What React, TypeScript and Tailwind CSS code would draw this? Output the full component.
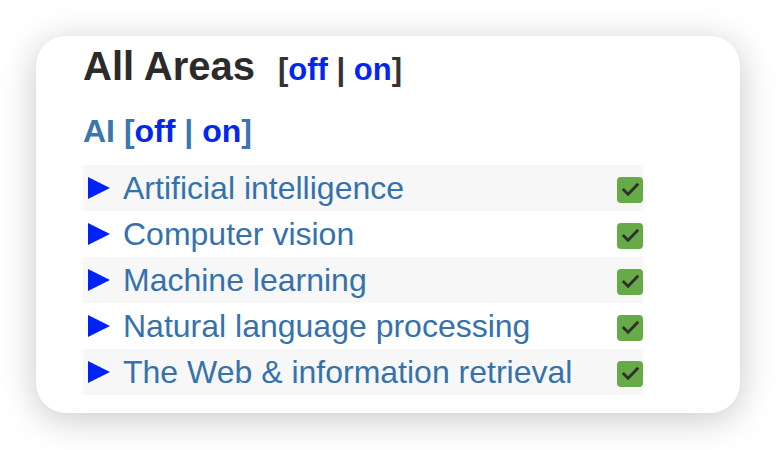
import React from 'react';

const areas = [
  'Artificial intelligence',
  'Computer vision',
  'Machine learning',
  'Natural language processing',
  'The Web & information retrieval',
];

function CheckBox() {
  return (
    <span className="mt-[4px] flex h-[26px] w-[26px] items-center justify-center rounded-[4px] bg-[#66ab48]">
      <svg viewBox="0 0 24 24" className="h-[19px] w-[19px]">
        <path d="M3.5 12.5 L9 18 L20.5 6" fill="none" stroke="#2f2f2f" strokeWidth="3.6" strokeLinecap="square" />
      </svg>
    </span>
  );
}

function Toggle({ bracket }: { bracket: string }) {
  return (
    <span className={bracket}>
      [<span className="text-[#0026f0]">off</span> | <span className="text-[#0026f0]">on</span>]
    </span>
  );
}

export default function App() {
  return (
    <div className="flex h-[450px] w-[776px] bg-white pl-[36px] pt-[36px] font-['Liberation_Sans',Arial,sans-serif]">
      <div className="h-[377px] w-[704px] rounded-[30px] bg-white pl-[47px] pt-[6px] shadow-[0_6px_36px_rgba(0,0,0,0.22)]">
        <div className="flex items-baseline">
          <h1 className="text-[40px] leading-[48px] font-bold text-[#2b2b2b]">All Areas</h1>
          <span className="ml-[23px] text-[31px] font-bold">
            <Toggle bracket="text-[#333]" />
          </span>
        </div>
        <div className="mt-[18px] text-[32px] leading-[38px] font-bold text-[#3a76af]">
          AI <Toggle bracket="text-[#3a76af]" />
        </div>
        <ul className="mt-[15px] w-[560px]">
          {areas.map((a, i) => (
            <li
              key={a}
              className={`flex h-[46px] items-center justify-between ${i % 2 === 0 ? 'bg-[#f7f7f7]' : ''}`}
            >
              <span className="flex items-center text-[32px] text-[#3572ac]">
                <svg viewBox="0 0 22 22" className="ml-[5px] mr-[13px] h-[22px] w-[22px]">
                  <polygon points="0,0 22,11 0,22" fill="#0022f5" />
                </svg>
                {a}
              </span>
              <CheckBox />
            </li>
          ))}
        </ul>
      </div>
    </div>
  );
}
